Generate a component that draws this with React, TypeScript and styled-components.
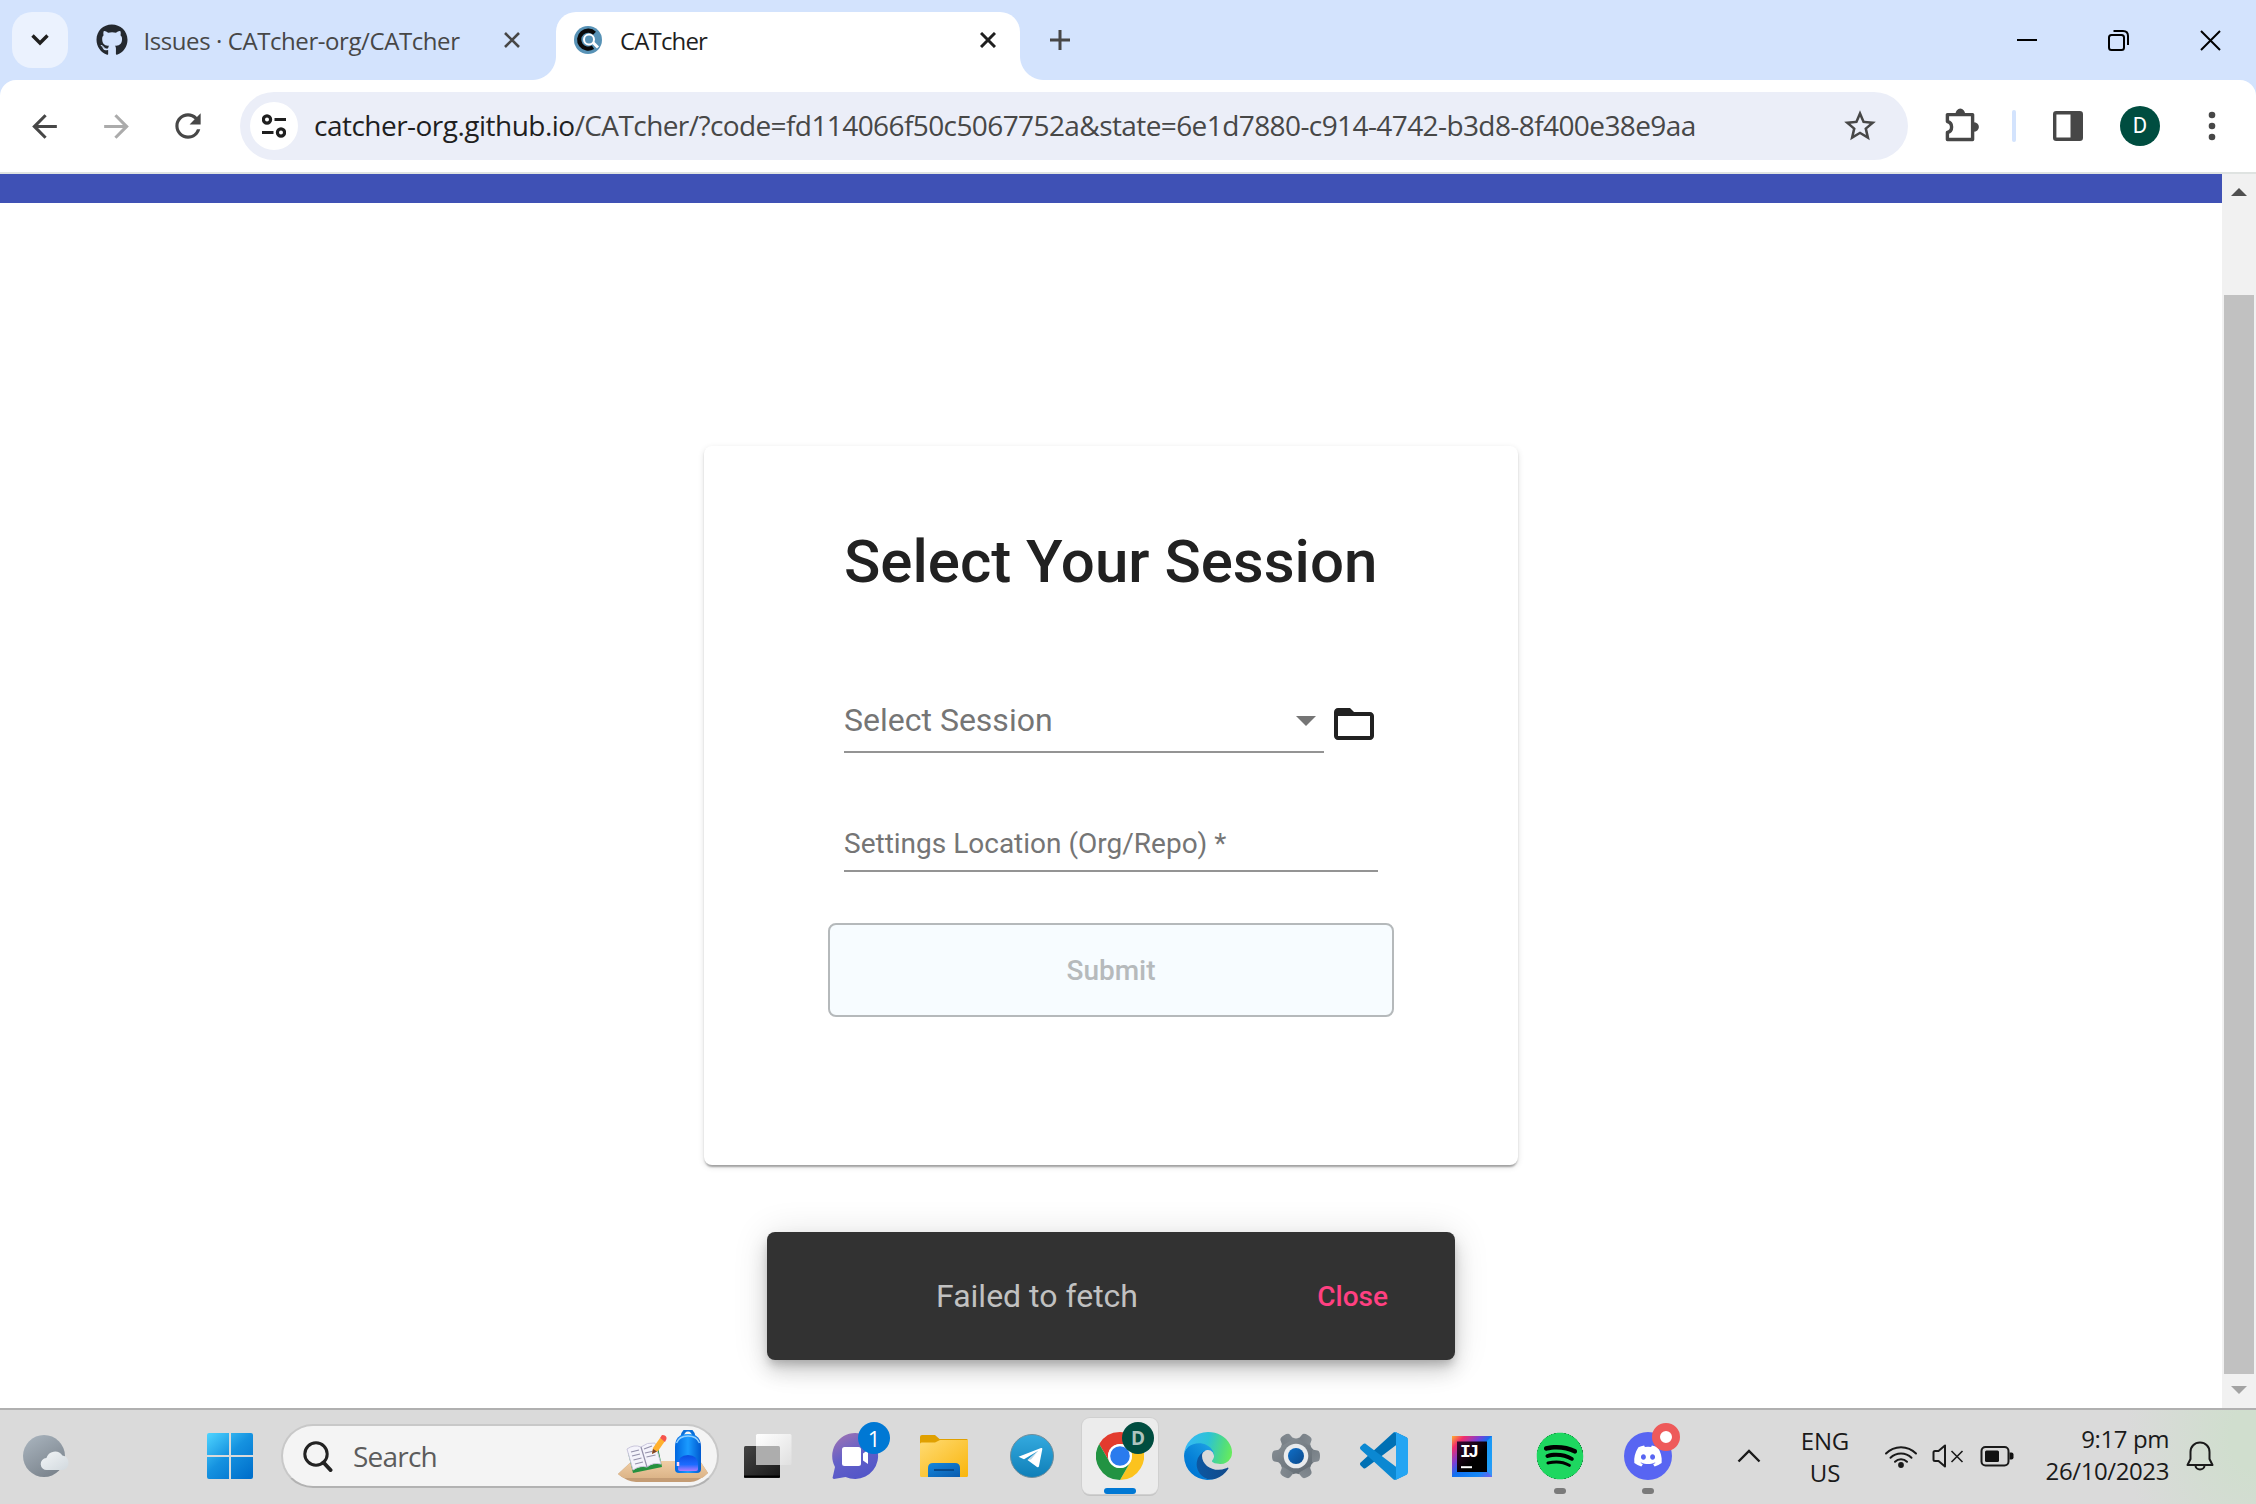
import React from 'react';
import styled, { createGlobalStyle } from 'styled-components';
import { FaGithub, FaSpotify, FaDiscord } from 'react-icons/fa';
import { MdArrowBack, MdArrowForward, MdRefresh, MdStarBorder } from 'react-icons/md';

const GlobalStyle = createGlobalStyle`
  * { box-sizing: border-box; }
  body { margin: 0; background: #fff; font-family: "Open Sans", "Noto Sans", sans-serif; }
  svg { display: block; flex: none; }
  button { font: inherit; border: 0; padding: 0; background: none; }
`;

const Desktop = styled.div`
  width: 2256px;
  height: 1504px;
  display: flex;
  flex-direction: column;
  overflow: hidden;
`;

/* ---------- Tab strip ---------- */

const TabStrip = styled.header`
  height: 80px;
  background: #d3e3fd;
  display: flex;
  align-items: center;
  padding-left: 12px;
`;

const TabSearch = styled.button`
  width: 56px;
  height: 56px;
  border-radius: 20px;
  background: #ebf2fe;
  display: grid;
  place-items: center;
`;

const Tab = styled.div<{ $active?: boolean }>`
  position: relative;
  align-self: flex-end;
  width: ${(p) => (p.$active ? 464 : 488)}px;
  height: 68px;
  padding: ${(p) => (p.$active ? '0 24px 12px 18px' : '0 36px 12px 28px')};
  border-radius: 20px 20px 0 0;
  background: ${(p) => (p.$active ? '#fff' : 'transparent')};
  color: ${(p) => (p.$active ? '#1f1f1f' : '#474747')};
  display: flex;
  align-items: center;
  &::before,
  &::after {
    content: '';
    display: ${(p) => (p.$active ? 'block' : 'none')};
    position: absolute;
    bottom: 0;
    width: 24px;
    height: 24px;
  }
  &::before {
    left: -24px;
    background: radial-gradient(circle at 0 0, transparent 23.5px, #fff 24.5px);
  }
  &::after {
    right: -24px;
    background: radial-gradient(circle at 100% 0, transparent 23.5px, #fff 24.5px);
  }
`;

const TabTitle = styled.span<{ $tight?: boolean }>`
  flex: 1;
  margin-left: ${(p) => (p.$tight ? 18 : 15.5)}px;
  padding-top: 2px;
  font-size: 24px;
  letter-spacing: ${(p) => (p.$tight ? '-0.85px' : '-0.42px')};
  line-height: 32px;
  white-space: nowrap;
`;

const NewTab = styled.button`
  margin-left: 30px;
`;

const WindowControls = styled.div`
  margin-left: auto;
  display: flex;
`;

const WindowButton = styled.button`
  width: 91.5px;
  height: 80px;
  display: grid;
  place-items: center;
`;

/* ---------- Toolbar ---------- */

const ToolbarBack = styled.div`
  background: #d3e3fd;
`;

const Toolbar = styled.nav`
  height: 94px;
  background: #fff;
  border-bottom: 2px solid #dfe3e1;
  border-radius: 16px 16px 0 0;
  display: flex;
  align-items: center;
  padding-left: 8px;
`;

const NavButton = styled.button<{ $disabled?: boolean }>`
  width: 72px;
  display: grid;
  place-items: center;
  color: ${(p) => (p.$disabled ? '#ababab' : '#474747')};
`;

const Omnibox = styled.div`
  margin-left: 16px;
  width: 1668px;
  height: 68px;
  border-radius: 34px;
  background: #ebeef8;
  display: flex;
  align-items: center;
  padding: 0 29px 0 10px;
`;

const SiteInfo = styled.button`
  width: 48px;
  height: 48px;
  border-radius: 50%;
  background: #fff;
  display: grid;
  place-items: center;
`;

const Url = styled.span`
  flex: 1;
  margin-left: 16px;
  padding-bottom: 2px;
  font-size: 28px;
  line-height: 40px;
  letter-spacing: -0.59px;
  white-space: nowrap;
  color: #474747;
  b {
    font-weight: 400;
    letter-spacing: -0.52px;
    color: #1f1f1f;
  }
`;

const Star = styled.span`
  color: #474747;
`;

const ToolbarEnd = styled.div`
  flex: 1;
  display: flex;
  align-items: center;
  padding: 0 40px 0 36px;
`;

const Divider = styled.i`
  width: 4px;
  height: 32px;
  border-radius: 2px;
  background: #d3e3fd;
  margin: 0 37px 0 32px;
`;

const Avatar = styled.span`
  width: 40px;
  height: 40px;
  margin: 0 auto 0 37px;
  border-radius: 50%;
  background: #004d40;
  color: #fff;
  font: 400 22px/40px Roboto, sans-serif;
  text-align: center;
`;

/* ---------- Page ---------- */

const Viewport = styled.div`
  height: 1234px;
  display: flex;
`;

const Page = styled.main`
  flex: 1;
  display: flex;
  flex-direction: column;
  align-items: center;
  font-family: Roboto, sans-serif;
`;

const AppBar = styled.div`
  width: 100%;
  height: 29px;
  background: #3f51b5;
`;

const Card = styled.section`
  width: 814px;
  height: 719px;
  margin-top: 243px;
  padding: 86px 140px 0;
  border-radius: 8px;
  background: #fff;
  box-shadow:
    0 4px 2px -2px rgba(0, 0, 0, 0.2),
    0 2px 2px 0 rgba(0, 0, 0, 0.14),
    0 2px 6px 0 rgba(0, 0, 0, 0.12);
`;

const Title = styled.h1`
  margin: 0;
  font-size: 60px;
  font-weight: 500;
  line-height: 60px;
  white-space: nowrap;
  color: #212121;
`;

const SelectRow = styled.div`
  margin-top: 108px;
  height: 53px;
  display: flex;
  gap: 6px;
`;

const SelectField = styled.div`
  width: 480px;
  border-bottom: 2px solid #949494;
  padding: 2px 8px 0 0;
  display: flex;
  justify-content: space-between;
  font-size: 32px;
  line-height: 36px;
  color: #757575;
`;

const Caret = styled.i`
  margin-top: 14px;
  border: 10px solid transparent;
  border-top-color: #757575;
  border-bottom-width: 0;
  height: 10px;
`;

const TextField = styled.div`
  margin-top: 75px;
  height: 44px;
  border-bottom: 2px solid #949494;
  font-size: 28px;
  line-height: 32px;
  color: #757575;
`;

const Submit = styled.button`
  display: block;
  width: 566px;
  height: 94px;
  margin: 51px -16px 0;
  border: 2px solid #b5b9bb;
  border-radius: 8px;
  background: #f7fcff;
  font-size: 28px;
  font-weight: 500;
  color: #b6babc;
`;

const Snackbar = styled.div`
  width: 688px;
  height: 128px;
  margin-top: 67px;
  padding: 0 67px 0 169px;
  border-radius: 8px;
  background: #323232;
  display: flex;
  align-items: center;
  justify-content: space-between;
  font-size: 32px;
  color: #c1c1c1;
  box-shadow:
    0 6px 10px -2px rgba(0, 0, 0, 0.2),
    0 12px 20px 0 rgba(0, 0, 0, 0.14),
    0 2px 36px 0 rgba(0, 0, 0, 0.12);
`;

const SnackAction = styled.button`
  font-size: 28px;
  font-weight: 500;
  color: #ff4081;
`;

const Scrollbar = styled.aside`
  width: 34px;
  background: #f1f1f1;
  display: flex;
  flex-direction: column;
  align-items: center;
  padding: 14px 0;
`;

const ScrollArrow = styled.i<{ $down?: boolean }>`
  width: 16px;
  height: 8px;
  background: ${(p) => (p.$down ? '#a3a3a3' : '#505050')};
  clip-path: ${(p) => (p.$down ? 'polygon(0 0, 100% 0, 50% 100%)' : 'polygon(50% 0, 100% 100%, 0 100%)')};
`;

const Thumb = styled.div`
  width: 30px;
  flex: 1;
  margin: 99px 0 12px;
  background: #c1c1c1;
`;

/* ---------- Taskbar ---------- */

const Taskbar = styled.footer`
  height: 96px;
  border-top: 2px solid #b0b0b0;
  padding-bottom: 2px;
  background:
    radial-gradient(ellipse 130px 160px at 100% 30%, #d0dece 20%, rgba(208, 222, 206, 0) 100%),
    #dadada;
  display: flex;
  align-items: center;
  color: #1a1a1a;
`;

const Weather = styled.div`
  width: 207px;
  padding-left: 22px;
`;

const SearchBox = styled.div`
  width: 438px;
  height: 64px;
  margin: 0 5px 0 28px;
  padding: 0 9px 0 20px;
  border: 2px solid #c8c8c8;
  border-bottom-color: #b2b2b2;
  border-radius: 32px;
  background: #f4f4f4;
  display: flex;
  align-items: center;
  font-size: 28px;
  letter-spacing: -0.8px;
  color: #5c5c5c;
`;

const SearchLabel = styled.span`
  flex: 1;
  margin-left: 20px;
`;

const AppSlot = styled.div`
  width: 88px;
  height: 76px;
  display: flex;
  justify-content: center;
`;

const AppTile = styled.div<{ $active?: boolean }>`
  position: relative;
  width: 76px;
  height: 76px;
  border-radius: 8px;
  background: ${(p) => (p.$active ? '#ececec' : 'transparent')};
  box-shadow: ${(p) => (p.$active ? '0 0 0 1px #d0d0d0, 0 2px 0 #c4c4c4' : 'none')};
  display: grid;
  place-items: center;
`;

const RunMark = styled.i<{ $active?: boolean }>`
  position: absolute;
  bottom: 0;
  left: 50%;
  transform: translateX(-50%);
  width: ${(p) => (p.$active ? 32 : 12)}px;
  height: 6px;
  border-radius: 3px;
  background: ${(p) => (p.$active ? '#0078d4' : '#7a7a7a')};
`;

const Badge = styled.span<{ $bg: string; $bold?: boolean }>`
  position: absolute;
  top: 4px;
  right: 4px;
  width: 32px;
  height: 32px;
  border-radius: 50%;
  background: ${(p) => p.$bg};
  color: ${(p) => (p.$bold ? '#aec4bf' : '#fff')};
  font-size: ${(p) => (p.$bold ? 19 : 22)}px;
  font-weight: ${(p) => (p.$bold ? 700 : 400)};
  line-height: 32px;
  text-align: center;
`;

const CountBadge = styled(Badge)`
  right: 4px;
`;

const RecordBadge = styled.span`
  position: absolute;
  top: 5px;
  right: 6px;
  width: 28px;
  height: 28px;
  border-radius: 50%;
  border: 8px solid #ee5a5a;
  background: #fff;
`;

const SpotifyDisc = styled.span`
  width: 48px;
  height: 48px;
  border-radius: 50%;
  background: radial-gradient(circle, #000 68%, transparent 69%);
  color: #1ed760;
  svg { width: 48px; height: 48px; }
`;

const DiscordDisc = styled.span`
  width: 48px;
  height: 48px;
  border-radius: 50%;
  background: #5865f2;
  color: #fff;
  display: grid;
  place-items: center;
`;

const TraySlot = styled.div<{ $w: number; $ml?: number }>`
  width: ${(p) => p.$w}px;
  margin-left: ${(p) => p.$ml || 0}px;
  display: grid;
  place-items: center;
`;

const TrayText = styled.div<{ $w: number; $end?: boolean }>`
  width: ${(p) => p.$w}px;
  padding-bottom: ${(p) => (p.$end ? 3 : 0)}px;
  padding-top: ${(p) => (p.$end ? 0 : 1)}px;
  font-size: 24px;
  line-height: 32px;
  letter-spacing: ${(p) => (p.$end ? '-0.4px' : '-0.2px')};
  text-align: ${(p) => (p.$end ? 'right' : 'center')};
  white-space: pre-line;
`;

/* ---------- Drawings ---------- */

const Cross = ({ size, stroke, color }: { size: number; stroke: number; color: string }) => (
  <svg width={size} height={size} viewBox={`0 0 ${size} ${size}`} stroke={color} strokeWidth={stroke}>
    <path d={`M1 1L${size - 1} ${size - 1}M${size - 1} 1L1 ${size - 1}`} />
  </svg>
);

const CatcherIcon = () => (
  <svg width="28" height="28" viewBox="0 0 28 28" fill="none">
    <circle cx="14" cy="14" r="14" fill="#5792b6" />
    <path d="M20.5 7.2A9 9 0 1 0 19 21.2" stroke="#0a0a0a" strokeWidth="4.2" />
    <circle cx="15" cy="13.5" r="5" stroke="#fff" strokeWidth="2" />
    <path d="M19 16.5l5 5" stroke="#fff" strokeWidth="3" />
  </svg>
);

const TuneIcon = () => (
  <svg width="24" height="24" viewBox="0 0 24 24" fill="none" stroke="#1f1f1f" strokeWidth="3.2">
    <circle cx="5" cy="5.5" r="3.6" />
    <path d="M12.5 5.5H24M0 18.5h11.5" />
    <circle cx="19" cy="18.5" r="3.6" />
  </svg>
);

const PuzzleIcon = () => (
  <svg width="36" height="36" viewBox="0 0 36 36">
    <path d="M4.500 6.600H28.600V31.500H3.400V24.500C9 23.200 9 14.800 3.400 13.500V6.600Z" fill="none" stroke="#474747" strokeWidth="3.400" strokeLinejoin="round" />
    <path d="M11.500 6a4.800 5.400 0 0 1 9.600 0zM29.500 14.200a5.400 4.800 0 0 1 0 9.600z" fill="#474747" />
  </svg>
);

const SidePanelIcon = () => (
  <svg width="30" height="30" viewBox="0 0 30 30">
    <rect x="1.7" y="1.7" width="26.6" height="26.6" rx="1.5" fill="none" stroke="#474747" strokeWidth="3.4" />
    <path d="M17.5 1.5h10v27h-10z" fill="#474747" />
  </svg>
);

const DotsIcon = () => (
  <svg width="8" height="30" viewBox="0 0 8 30" fill="#474747">
    <circle cx="4" cy="4" r="3.3" /><circle cx="4" cy="15" r="3.3" /><circle cx="4" cy="26" r="3.3" />
  </svg>
);

const FolderIcon = () => (
  <svg width="48" height="48" viewBox="0 0 24 24" fill="#212121">
    <path d="M20 6h-8l-2-2H4c-1.1 0-1.99.9-1.99 2L2 18c0 1.1.9 2 2 2h16c1.1 0 2-.9 2-2V8c0-1.1-.9-2-2-2zm0 12H4V8h16v10z" />
  </svg>
);

const WeatherIcon = () => (
  <svg width="48" height="44" viewBox="0 0 48 44">
    <defs>
      <linearGradient id="moon" x1="0" y1="0" x2=".6" y2="1"><stop offset="0" stopColor="#abb6c0" /><stop offset="1" stopColor="#7c858e" /></linearGradient>
      <linearGradient id="cloud" x1="0" y1="0" x2="1" y2="1"><stop offset="0" stopColor="#f2f5f7" /><stop offset="1" stopColor="#d2d9de" /></linearGradient>
    </defs>
    <circle cx="22" cy="22" r="21" fill="url(#moon)" />
    <path d="M25 36a6 6 0 0 1-.6-12 9 9 0 0 1 16-2.600 7.500 7.500 0 0 1 .6 14.600z" fill="url(#cloud)" />
  </svg>
);

const WindowsIcon = () => (
  <svg width="46" height="46" viewBox="0 0 46 46">
    <defs>
      <linearGradient id="win" gradientUnits="userSpaceOnUse" x1="0" y1="0" x2="40" y2="46"><stop offset="0" stopColor="#4fd5ff" /><stop offset=".5" stopColor="#1592e0" /><stop offset="1" stopColor="#0070cc" /></linearGradient>
    </defs>
    <path fill="url(#win)" d="M2 0h20v22H0V2q0-2 2-2zM24 0h20q2 0 2 2v20H24zM0 24h22v22H2q-2 0-2-2zM24 24h22v20q0 2-2 2H24z" />
  </svg>
);

const MagnifierIcon = () => (
  <svg width="30" height="31" viewBox="0 0 30 31" fill="none" stroke="#222">
    <circle cx="13" cy="13" r="11.200" strokeWidth="3" />
    <path d="M20.500 21.500l7 7.500" strokeWidth="4" strokeLinecap="round" />
  </svg>
);

const StudyIcon = () => (
  <svg width="90" height="52" viewBox="0 0 90 52">
    <defs>
      <linearGradient id="bag" x1="0" y1="0" x2="1" y2="0"><stop offset="0" stopColor="#0067e0" /><stop offset=".5" stopColor="#1a9bff" /><stop offset="1" stopColor="#0059d0" /></linearGradient>
      <linearGradient id="desk" x1="0" y1="0" x2="0" y2="1"><stop offset="0" stopColor="#efcda4" /><stop offset="1" stopColor="#dcb488" /></linearGradient>
      <linearGradient id="pocket" x1="0" y1="0" x2="0" y2="1"><stop offset="0" stopColor="#0a4fe0" /><stop offset=".6" stopColor="#1c6cff" /><stop offset="1" stopColor="#b07bff" /></linearGradient>
    </defs>
    <path d="M0 44L14 31H82L90 43Q80 52 72 52H18Q8 51 0 44z" fill="#c49c74" />
    <path d="M0 44L14 31H82L90 43Q86 47 84 48H6Q2 46 0 44z" fill="url(#desk)" />
    <path d="M10 23L15 43L44 37L40 17z" fill="#25913f" />
    <path d="M9 19L15 40Q22 35 29 37Q35 32 43 34L37 13Q29 12 23 17Q16 14 9 19z" fill="#f4f3fb" stroke="#c9c6dc" strokeWidth="1" />
    <path d="M23 17L29 37M13 22l8-2M14 26l8-2M15.500 30l8-2M17 34l8-2M26 19l8-3M27 23l9-2M28.500 27l9-2" stroke="#9491aa" strokeWidth="1.200" fill="none" />
    <path d="M35 18L42 8L47 11L40 21L34 24z" fill="#ffb02e" />
    <path d="M34 24l1-5 4 2.500z" fill="#7b4330" />
    <path d="M42 8L44 5Q49 5 48.500 9L47 12z" fill="#f5544c" />
    <path d="M64 7q1-7 6-7t6 7" fill="none" stroke="#0a6fd8" strokeWidth="3" />
    <path d="M57 17Q57 4 70 4t13 13V39Q83 43 79 43H61Q57 43 57 39z" fill="url(#bag)" />
    <path d="M58.500 13Q61 6 70 6t11.500 7" fill="none" stroke="#8fd0ff" strokeWidth="1.500" />
    <path d="M60 35Q60 25 70 25t10 10v4q0 2-2 2H62q-2 0-2-2z" fill="url(#pocket)" />
    <path d="M60 32v4" stroke="#ffd6f0" strokeWidth="2.500" />
  </svg>
);

const TaskViewIcon = () => (
  <svg width="48" height="44" viewBox="0 0 48 44">
    <defs>
      <linearGradient id="tvd" x1="0" y1="0" x2="1" y2="1"><stop offset="0" stopColor="#444" /><stop offset="1" stopColor="#181818" /></linearGradient>
      <linearGradient id="tvl" x1="0" y1="0" x2="1" y2="1"><stop offset="0" stopColor="#fff" /><stop offset="1" stopColor="#e0e0e0" /></linearGradient>
    </defs>
    <rect x="0" y="12" width="36" height="32" rx="1.500" fill="url(#tvd)" />
    <path d="M0 42.500h36" stroke="#000" strokeWidth="2" />
    <rect x="12" y="0" width="35.500" height="31" rx="1.500" fill="url(#tvl)" />
    <path d="M12 12h22.500q1.500 0 1.500 1.500V31H13.500q-1.500 0-1.500-1.500z" fill="#adadad" />
  </svg>
);

const ChatIcon = () => (
  <svg width="48" height="46" viewBox="0 0 48 46">
    <defs><linearGradient id="chat" x1="0" y1="0" x2=".5" y2="1"><stop offset="0" stopColor="#a675b0" /><stop offset=".55" stopColor="#6360c8" /><stop offset="1" stopColor="#5457c8" /></linearGradient></defs>
    <path d="M23 0a23 23 0 1 1-9.500 43.900L2 46q-2-.2-1.200-2.200L3 34A23 23 0 0 1 23 0z" fill="url(#chat)" />
    <rect x="10" y="14" width="19" height="19" rx="2.500" fill="#fff" />
    <path d="M31 20.500l5-3.500v14l-5-3.500z" fill="#fff" />
  </svg>
);

const ExplorerIcon = () => (
  <svg width="48" height="42" viewBox="0 0 48 42">
    <defs>
      <linearGradient id="fold" x1="0" y1="0" x2="1" y2="1"><stop offset="0" stopColor="#ffdb73" /><stop offset="1" stopColor="#f9b50c" /></linearGradient>
      <linearGradient id="tray" x1="0" y1="0" x2="1" y2="1"><stop offset="0" stopColor="#1487dd" /><stop offset="1" stopColor="#0a5cae" /></linearGradient>
    </defs>
    <path d="M0 2Q0 0 2 0h13l4.500 4H46.500q1.500 0 1.500 1.500V20H0z" fill="#e0a000" />
    <path d="M0 9Q0 7.500 1.500 7.500H15L20 5H48V40.500q0 1.500-1.500 1.500h-45Q0 42 0 40.500z" fill="url(#fold)" />
    <path d="M8 42V33q0-5 5-5h22q5 0 5 5v9z" fill="url(#tray)" />
    <path d="M14 35h20" stroke="#064a8c" strokeWidth="2" />
  </svg>
);

const TelegramIcon = () => (
  <svg width="44" height="44" viewBox="0 0 44 44">
    <defs><linearGradient id="tg" x1="0" y1="0" x2="0" y2="1"><stop offset="0" stopColor="#34aadf" /><stop offset="1" stopColor="#0f7fb8" /></linearGradient></defs>
    <circle cx="22" cy="22" r="21.500" fill="url(#tg)" stroke="#6f8d9b" />
    <path d="M8.500 22.800L31 14q1.600-.5 1.300 1.300L29 32q-.4 1.800-2 .9L17.500 26l10.800-9.300L14 25.200z" fill="#fff" />
    <path d="M17.500 26l10.800-9.300L21 25.500z" fill="#bcd6e6" />
  </svg>
);

const ChromeIcon = () => (
  <svg width="48" height="48" viewBox="0 0 48 48">
    <path d="M3.215 12A24 24 0 0 1 44.785 12H24A12 12 0 0 0 13.608 30z" fill="#e33b2e" />
    <path d="M44.785 12A24 24 0 0 1 24 48L34.392 30A12 12 0 0 0 24 12z" fill="#fcc31e" />
    <path d="M24 48A24 24 0 0 1 3.215 12L13.608 30A12 12 0 0 0 34.392 30z" fill="#229342" />
    <circle cx="24" cy="24" r="12" fill="#fff" />
    <circle cx="24" cy="24" r="9.800" fill="#2a7bee" />
  </svg>
);

const EdgeIcon = () => (
  <svg width="48" height="48" viewBox="0 0 256 256">
    <defs>
      <linearGradient id="ea" x1="58" y1="177" x2="236" y2="177" gradientUnits="userSpaceOnUse"><stop offset="0" stopColor="#0c59a4" /><stop offset="1" stopColor="#114a8b" /></linearGradient>
      <linearGradient id="eb" x1="153" y1="100" x2="46" y2="216" gradientUnits="userSpaceOnUse"><stop offset="0" stopColor="#1b9de2" /><stop offset=".16" stopColor="#1595df" /><stop offset=".67" stopColor="#0680d7" /><stop offset="1" stopColor="#0078d4" /></linearGradient>
      <linearGradient id="ec" x1="10" y1="60" x2="250" y2="120" gradientUnits="userSpaceOnUse"><stop offset="0" stopColor="#35b9f5" /><stop offset=".45" stopColor="#2cc3d5" /><stop offset=".8" stopColor="#50dc80" /><stop offset="1" stopColor="#66eb5e" /></linearGradient>
    </defs>
    <path transform="translate(-4.630 -4.920)" fill="url(#ea)" d="M235.680 195.460a93.730 93.730 0 0 1-10.540 4.710 101.870 101.870 0 0 1-35.900 6.460c-47.320 0-88.540-32.550-88.540-74.320A31.480 31.480 0 0 1 117.130 105c-42.800 1.800-53.800 46.400-53.800 72.530 0 73.880 68.090 81.370 82.760 81.370 7.910 0 19.840-2.300 27-4.560l1.310-.44a128.340 128.340 0 0 0 66.600-52.800 4 4 0 0 0-5.320-5.640z" />
    <path fill="url(#eb)" d="M105.730 241.420a79.200 79.200 0 0 1-22.740-21.340 80.720 80.720 0 0 1 29.530-120c3.120-1.470 8.450-4.130 15.540-4a32.350 32.350 0 0 1 25.690 13 31.880 31.880 0 0 1 6.360 18.660c0-.21 24.460-79.600-80-79.600-43.900 0-80 41.660-80 78.210a130.150 130.150 0 0 0 12.110 56 128 128 0 0 0 156.380 67.110 75.550 75.550 0 0 1-62.780-8z" />
    <path fill="url(#ec)" d="M152.330 148.860c-.81 1.050-3.300 2.500-3.300 5.660 0 2.610 1.700 5.120 4.720 7.230 14.380 10 41.490 8.680 41.560 8.680a59.560 59.560 0 0 0 30.270-8.350 61.380 61.380 0 0 0 30.430-52.880c.26-22.410-8-37.310-11.340-43.910C223.480 23.840 177.720 0 128 0A128 128 0 0 0 0 126.200c.48-36.540 36.800-66.050 80-66.050 3.500 0 23.460.34 42 10.070 16.340 8.580 24.900 18.940 30.850 29.210 6.180 10.670 7.280 24.150 7.280 29.520s-2.740 13.330-7.800 19.910z" />
  </svg>
);

const gearTeeth = [0, 60, 120, 180, 240, 300];

const SettingsIcon = () => (
  <svg width="48" height="48" viewBox="0 0 48 48">
    <defs>
      <linearGradient id="gear" gradientUnits="userSpaceOnUse" x1="8" y1="0" x2="38" y2="48"><stop offset="0" stopColor="#8d949a" /><stop offset="1" stopColor="#5d666e" /></linearGradient>
      <linearGradient id="hub" x1="0" y1="0" x2="1" y2="1"><stop offset="0" stopColor="#0f6fc8" /><stop offset="1" stopColor="#0c4a8c" /></linearGradient>
    </defs>
    <g fill="url(#gear)">
      <circle cx="24" cy="24" r="18.500" />
      {gearTeeth.map((a) => (
        <path key={a} transform={`rotate(${a} 24 24)`} d="M8 17.500L2.500 18.500Q0 19 0 24t2.500 5.500L8 30.500z" />
      ))}
    </g>
    <g fill="#dadada">
      {gearTeeth.map((a) => (
        <circle key={a} transform={`rotate(${a + 30} 24 24)`} cx="2.800" cy="24" r="3.600" />
      ))}
    </g>
    <circle cx="24" cy="24" r="12.300" fill="#e9ebed" />
    <circle cx="24" cy="24" r="8" fill="url(#hub)" />
  </svg>
);

const CodeIcon = () => (
  <svg width="48" height="48" viewBox="0 0 100 100">
    <path fill="#0070b4" d="M96.461 10.796L75.857.876C73.472-.273 70.622.212 68.750 2.083L1.299 63.583c-1.815 1.654-1.813 4.511.004 6.162l5.510 5.009c1.485 1.350 3.722 1.450 5.321.237L93.361 13.370C96.086 11.303 100 13.246 100 16.667v-.24c0-2.400-1.375-4.589-3.539-5.631z" />
    <path fill="#0b88d2" d="M96.461 89.204l-20.604 9.920c-2.385 1.149-5.235.664-7.107-1.207L1.299 36.417c-1.815-1.654-1.813-4.511.004-6.162l5.510-5.009c1.485-1.350 3.722-1.450 5.321-.237L93.361 86.630C96.086 88.697 100 86.754 100 83.333v.24c0 2.400-1.375 4.589-3.539 5.631z" />
    <path fill="#24a5f3" d="M75.858 99.126c-2.386 1.148-5.236.662-7.108-1.209C71.056 100.223 75 98.590 75 95.328V4.672C75 1.410 71.056-.223 68.750 2.083 70.622.211 73.472-.274 75.858.874l20.601 9.907C98.623 11.822 100 14.011 100 16.413v67.174c0 2.402-1.377 4.592-3.541 5.633z" />
  </svg>
);

const IdeaIcon = () => (
  <svg width="40" height="41" viewBox="0 0 40 41">
    <defs>
      <linearGradient id="ij" x1="0" y1="0" x2="1" y2="1"><stop offset="0" stopColor="#ffb02e" /><stop offset=".16" stopColor="#f22c6b" /><stop offset=".36" stopColor="#7a3fd6" /><stop offset=".5" stopColor="#1070f0" /><stop offset=".8" stopColor="#1588f5" /><stop offset="1" stopColor="#7a5cf0" /></linearGradient>
      <linearGradient id="ijb" x1="0" y1="0" x2="1" y2="1"><stop offset="0" stopColor="#3a0733" /><stop offset=".6" stopColor="#000" /></linearGradient>
    </defs>
    <path d="M0 0h40v41H0z" fill="url(#ij)" />
    <path d="M40 0v41L34 34V6z" fill="#20a8f8" opacity=".7" />
    <path d="M5 5.500h30v30.500H5z" fill="url(#ijb)" />
    <text x="8" y="21" fill="#fff" fontFamily="Liberation Mono, monospace" fontWeight="700" fontSize="18" letterSpacing="-2.500">IJ</text>
    <path d="M9 31.200h11" stroke="#fff" strokeWidth="2" />
  </svg>
);

const WifiIcon = () => (
  <svg width="34" height="26" viewBox="0 0 34 26" fill="none" stroke="#1a1a1a" strokeWidth="2" strokeLinecap="round">
    <path d="M2 10.500a21 21 0 0 1 30 0M6.500 14.800a14.800 14.800 0 0 1 21 0M11 18.800a8.600 8.600 0 0 1 12 0" />
    <circle cx="17" cy="22" r="1.900" fill="#1a1a1a" />
  </svg>
);

const MuteIcon = () => (
  <svg width="32" height="24" viewBox="0 0 32 24" fill="none" stroke="#1a1a1a" strokeWidth="2" strokeLinejoin="round">
    <path d="M13 1.500v21L6.500 17H3q-1.500 0-1.500-1.500v-7Q1.500 7 3 7h3.500z" />
    <path d="M19.500 7l11 11M30.500 7l-11 11" strokeWidth="1.600" />
  </svg>
);

const BatteryIcon = () => (
  <svg width="34" height="22" viewBox="0 0 34 22">
    <rect x="1.500" y="2" width="27" height="18.500" rx="4" fill="none" stroke="#1a1a1a" strokeWidth="2" />
    <rect x="5" y="5.500" width="14" height="11.500" rx="1.500" fill="#111" />
    <path d="M29.500 7.500h2q2 0 2 2v3q0 2-2 2h-2z" fill="#111" />
  </svg>
);

const BellIcon = () => (
  <svg width="28" height="30" viewBox="0 0 28 30" fill="none" stroke="#1a1a1a" strokeWidth="2" strokeLinejoin="round">
    <path d="M14 1.500c5.500 0 9.500 4 9.500 9.500v7l3 6H1.500l3-6v-7C4.500 5.500 8.500 1.500 14 1.500zM9.500 24.500a4.500 4 0 0 0 9 0" />
  </svg>
);

const apps: { name: string; icon: React.ReactNode; extra?: React.ReactNode; active?: boolean }[] = [
  { name: 'taskview', icon: <TaskViewIcon /> },
  { name: 'chat', icon: <ChatIcon />, extra: <CountBadge $bg="#0078d4">1</CountBadge> },
  { name: 'explorer', icon: <ExplorerIcon /> },
  { name: 'telegram', icon: <TelegramIcon /> },
  { name: 'chrome', icon: <ChromeIcon />, active: true, extra: <><Badge $bg="#004d40" $bold>D</Badge><RunMark $active /></> },
  { name: 'edge', icon: <EdgeIcon /> },
  { name: 'settings', icon: <SettingsIcon /> },
  { name: 'code', icon: <CodeIcon /> },
  { name: 'idea', icon: <IdeaIcon /> },
  { name: 'spotify', icon: <SpotifyDisc><FaSpotify /></SpotifyDisc>, extra: <RunMark /> },
  { name: 'discord', icon: <DiscordDisc><FaDiscord size={30} /></DiscordDisc>, extra: <><RecordBadge /><RunMark /></> },
];

export default function App() {
  return (
    <Desktop>
      <GlobalStyle />
      <TabStrip>
        <TabSearch>
          <svg width="18" height="12" viewBox="0 0 18 12" fill="none" stroke="#1f1f1f" strokeWidth="3.400"><path d="M1.500 1.500L9 9l7.500-7.500" /></svg>
        </TabSearch>
        <Tab>
          <FaGithub size={32} color="#24292f" />
          <TabTitle>Issues · CATcher-org/CATcher</TabTitle>
          <Cross size={16} stroke={2.600} color="#474747" />
        </Tab>
        <Tab $active>
          <CatcherIcon />
          <TabTitle $tight>CATcher</TabTitle>
          <Cross size={16} stroke={3} color="#1f1f1f" />
        </Tab>
        <NewTab>
          <svg width="20" height="20" viewBox="0 0 20 20" stroke="#474747" strokeWidth="3"><path d="M10 0v20M0 10h20" /></svg>
        </NewTab>
        <WindowControls>
          <WindowButton><svg width="20" height="2" viewBox="0 0 20 2"><path d="M0 1h20" stroke="#000" strokeWidth="2" /></svg></WindowButton>
          <WindowButton>
            <svg width="21" height="21" viewBox="0 0 21 21" fill="none" stroke="#000" strokeWidth="2"><rect x="1" y="5" width="15" height="15" rx="2.500" /><path d="M5.500 1h9.500q5 0 5 5v9" /></svg>
          </WindowButton>
          <WindowButton><Cross size={21} stroke={2} color="#000" /></WindowButton>
        </WindowControls>
      </TabStrip>

      <ToolbarBack>
        <Toolbar>
          <NavButton><MdArrowBack size={37} /></NavButton>
          <NavButton $disabled><MdArrowForward size={37} /></NavButton>
          <NavButton><MdRefresh size={38} /></NavButton>
          <Omnibox>
            <SiteInfo><TuneIcon /></SiteInfo>
            <Url><b>catcher-org.github.io</b>/CATcher/?code=fd114066f50c5067752a&amp;state=6e1d7880-c914-4742-b3d8-8f400e38e9aa</Url>
            <Star><MdStarBorder size={38} /></Star>
          </Omnibox>
          <ToolbarEnd>
            <PuzzleIcon />
            <Divider />
            <SidePanelIcon />
            <Avatar>D</Avatar>
            <DotsIcon />
          </ToolbarEnd>
        </Toolbar>
      </ToolbarBack>

      <Viewport>
        <Page>
          <AppBar />
          <Card>
            <Title>Select Your Session</Title>
            <SelectRow>
              <SelectField>Select Session<Caret /></SelectField>
              <FolderIcon />
            </SelectRow>
            <TextField>Settings Location (Org/Repo) *</TextField>
            <Submit>Submit</Submit>
          </Card>
          <Snackbar>
            Failed to fetch
            <SnackAction>Close</SnackAction>
          </Snackbar>
        </Page>
        <Scrollbar>
          <ScrollArrow />
          <Thumb />
          <ScrollArrow $down />
        </Scrollbar>
      </Viewport>

      <Taskbar>
        <Weather><WeatherIcon /></Weather>
        <WindowsIcon />
        <SearchBox>
          <MagnifierIcon />
          <SearchLabel>Search</SearchLabel>
          <StudyIcon />
        </SearchBox>
        {apps.map((a) => (
          <AppSlot key={a.name}>
            <AppTile $active={a.active}>
              {a.icon}
              {a.extra}
            </AppTile>
          </AppSlot>
        ))}
        <TraySlot $w={76} $ml={19}>
          <svg width="24" height="14" viewBox="0 0 24 14" fill="none" stroke="#1a1a1a" strokeWidth="2.400"><path d="M1.500 12.500L12 2l10.500 10.500" /></svg>
        </TraySlot>
        <TrayText $w={76}>{'ENG\nUS'}</TrayText>
        <TraySlot $w={46} $ml={15}><WifiIcon /></TraySlot>
        <TraySlot $w={46} $ml={1}><MuteIcon /></TraySlot>
        <TraySlot $w={46} $ml={3}><BatteryIcon /></TraySlot>
        <TrayText $w={149} $end>{'9:17 pm\n26/10/2023'}</TrayText>
        <TraySlot $w={62}><BellIcon /></TraySlot>
      </Taskbar>
    </Desktop>
  );
}
